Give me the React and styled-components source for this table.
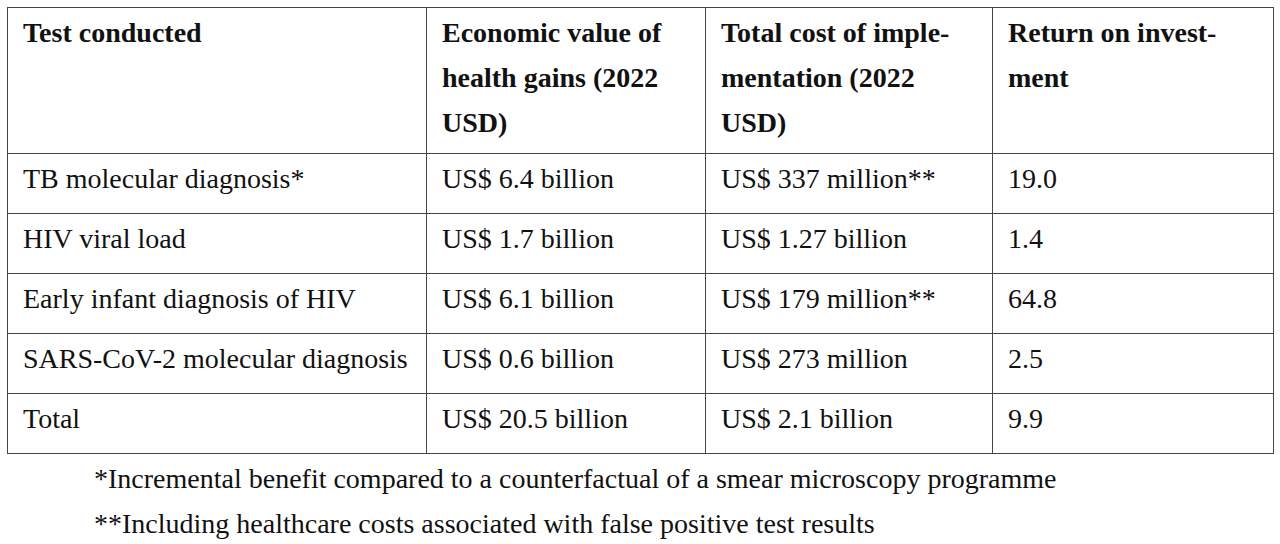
import React from 'react'
import styled, { createGlobalStyle } from 'styled-components'

const GlobalStyle = createGlobalStyle`
  html, body {
    margin: 0;
    padding: 0;
    background: #ffffff;
  }
`

const Page = styled.div`
  padding: 7px 0 0 7px;
`

const Table = styled.table`
  width: 1266px;
  border-collapse: collapse;
  table-layout: fixed;
`

const Col = styled.col`
  width: ${p => p.$w}px;
`

const HeadCell = styled.th`
  font: bold 28px/45px "Liberation Serif", serif;
  color: #111111;
  border: 1.5px solid #454545;
  text-align: left;
  vertical-align: top;
  padding: 2px 10px 8px 15px;
  height: 135px;
`

const Cell = styled.td`
  font: 28px/45px "Liberation Serif", serif;
  color: #111111;
  border: 1.5px solid #454545;
  vertical-align: top;
  padding: 2px 10px 12px 15px;
  white-space: nowrap;
`

const Notes = styled.div`
  padding-left: 87px;
  margin-top: 2px;
`

const Note = styled.p`
  margin: 0;
  font: 28px/45px "Liberation Serif", serif;
  color: #111111;
`

const rows = [
  ['TB molecular diagnosis*', 'US$ 6.4 billion', 'US$ 337 million**', '19.0'],
  ['HIV viral load', 'US$ 1.7 billion', 'US$ 1.27 billion', '1.4'],
  ['Early infant diagnosis of HIV', 'US$ 6.1 billion', 'US$ 179 million**', '64.8'],
  ['SARS-CoV-2 molecular diagnosis', 'US$ 0.6 billion', 'US$ 273 million', '2.5'],
  ['Total', 'US$ 20.5 billion', 'US$ 2.1 billion', '9.9'],
]

export default function App() {
  return (
    <Page>
      <GlobalStyle />
      <Table>
        <colgroup>
          <Col $w={419} />
          <Col $w={279} />
          <Col $w={287} />
          <Col $w={281} />
        </colgroup>
        <thead>
          <tr>
            <HeadCell>Test conducted</HeadCell>
            <HeadCell>Economic value of<br />health gains (2022<br />USD)</HeadCell>
            <HeadCell>Total cost of imple-<br />mentation (2022<br />USD)</HeadCell>
            <HeadCell>Return on invest-<br />ment</HeadCell>
          </tr>
        </thead>
        <tbody>
          {rows.map(r => (
            <tr key={r[0]}>
              {r.map((c, i) => <Cell key={i}>{c}</Cell>)}
            </tr>
          ))}
        </tbody>
      </Table>
      <Notes>
        <Note>*Incremental benefit compared to a counterfactual of a smear microscopy programme</Note>
        <Note>**Including healthcare costs associated with false positive test results</Note>
      </Notes>
    </Page>
  )
}
